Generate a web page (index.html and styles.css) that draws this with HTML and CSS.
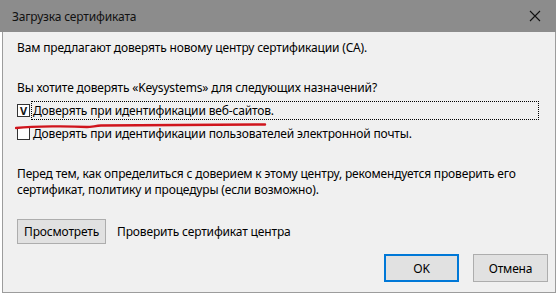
FILE: index.html
```html
<!DOCTYPE html>
<html lang="ru">
<head>
<meta charset="utf-8">
<title>Загрузка сертификата</title>
<link rel="stylesheet" href="styles.css">
</head>
<body>
<div class="window">
  <div class="titlebar">
    <span class="title">Загрузка сертификата</span>
    <span class="close">
      <svg width="12" height="12" viewBox="0 0 12 12"><path d="M1 1 L11 11 M11 1 L1 11" stroke="#111" stroke-width="1.1" fill="none"/></svg>
    </span>
  </div>
  <div class="content">
    <p class="line first">Вам предлагают доверять новому центру сертификации (CA).</p>
    <p class="line question">Вы хотите доверять «Keysystems» для следующих назначений?</p>
    <div class="check focused">
      <span class="box">V</span>
      <span class="label">Доверять при идентификации веб-сайтов.</span>
    </div>
    <div class="check">
      <span class="box"></span>
      <span class="label">Доверять при идентификации пользователей электронной почты.</span>
    </div>
    <p class="para">Перед тем, как определиться с доверием к этому центру, рекомендуется проверить его сертификат, политику и процедуры (если возможно).</p>
    <div class="viewrow">
      <button class="btn">Просмотреть</button>
      <span class="viewlabel">Проверить сертификат центра</span>
    </div>
    <div class="actions">
      <button class="btn action default">OK</button>
      <button class="btn action">Отмена</button>
    </div>
    <svg class="annot" width="260" height="10" viewBox="0 0 260 10"><path d="M1 6 C20 4 55 4 72 5 C76 5 80 4 86 3.5 L250 2.5" stroke="#d0141c" stroke-width="2.4" fill="none" stroke-linecap="round"/></svg>
  </div>
</div>
</body>
</html>
```
FILE: styles.css
```css
html, body {
  margin: 0;
  padding: 0;
  background: #ffffff;
}
body {
  font-family: "Noto Sans", "Open Sans", "Liberation Sans", sans-serif;
  font-size: 12px;
  letter-spacing: -0.16px;
  color: #000;
}
.window {
  width: 556px;
}
.titlebar {
  height: 32px;
  background: #8c8c8c;
  display: flex;
  align-items: center;
  justify-content: space-between;
  padding-left: 12px;
  box-sizing: border-box;
}
.title {
  font-size: 12px;
  color: #111;
  margin-top: 1px;
}
.close {
  width: 46px;
  height: 32px;
  display: flex;
  align-items: center;
  justify-content: center;
  margin-right: -2px;
}
.content {
  position: relative;
  margin-left: 2px;
  height: 261px;
  box-sizing: border-box;
  background: #f0f0f0;
  border-left: 1px solid #9c9c9c;
  border-right: 1px solid #9c9c9c;
  border-bottom: 1px solid #9c9c9c;
  padding: 8px 0 0 14px;
}
.line {
  margin: 0;
  line-height: 16px;
  height: 16px;
  white-space: nowrap;
}
.question {
  margin-top: 24px;
}
.check {
  display: flex;
  align-items: center;
  height: 17px;
  line-height: 17px;
  white-space: nowrap;
}
.check.focused {
  margin-top: 6px;
}
.check + .check {
  margin-top: 6px;
}
.box {
  width: 11px;
  height: 11px;
  border: 1px solid #333;
  background: #fff;
  display: flex;
  align-items: center;
  justify-content: center;
  font-size: 11px;
  font-weight: bold;
  line-height: 11px;
  letter-spacing: 0;
  color: #111;
  margin-right: 2px;
  flex: none;
}
.focused .label {
  outline: 1px dotted #000;
  outline-offset: 0;
  width: 505px;
  padding-left: 1px;
}
.label {
  padding-left: 1px;
}
.para {
  margin: 24px 0 0 0;
  line-height: 16px;
  width: 530px;
}
.viewrow {
  display: flex;
  align-items: center;
  margin-top: 21px;
  gap: 11px;
}
.btn {
  font-family: inherit;
  font-size: 12px;
  letter-spacing: -0.16px;
  color: #000;
  background: #e1e1e1;
  border: 1px solid #adadad;
  height: 25px;
  padding: 0 6px;
  margin: 0;
  box-sizing: border-box;
}
.viewlabel {
  white-space: nowrap;
}
.actions {
  display: flex;
  justify-content: flex-end;
  gap: 14px;
  margin-top: 10px;
  padding-right: 7px;
}
.action {
  width: 75px;
  height: 28px;
}
.action.default {
  border: 2px solid #0078d7;
}
.annot {
  position: absolute;
  left: 12px;
  top: 90px;
}
```
